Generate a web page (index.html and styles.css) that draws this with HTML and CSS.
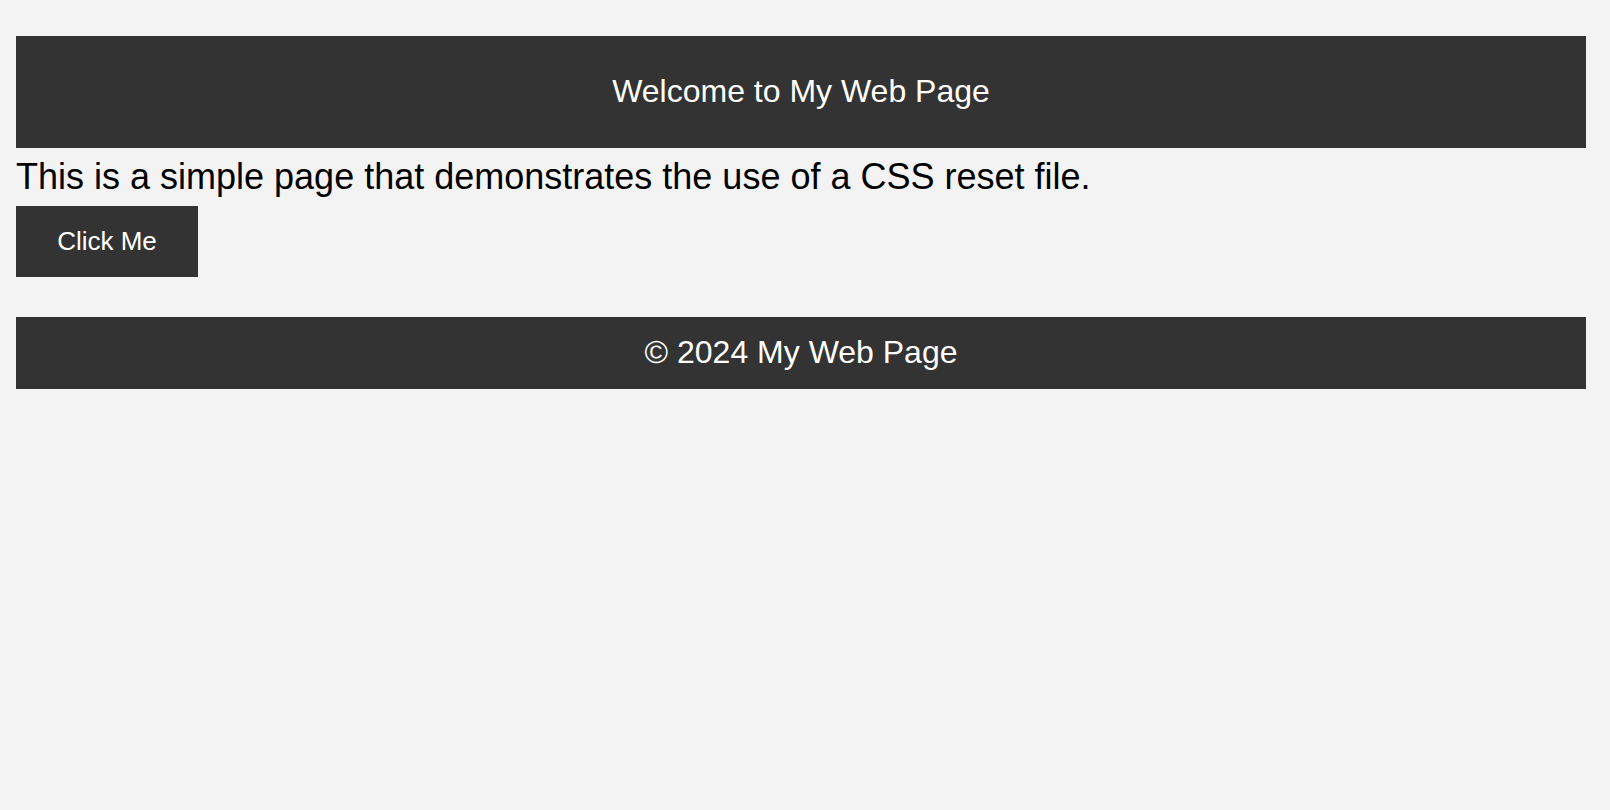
FILE: index.html
```html
<!DOCTYPE html>
<html lang="en">
<head>
<meta charset="utf-8">
<title>CSS Reset Demo</title>
<link rel="stylesheet" href="styles.css">
</head>
<body>
<div class="page">
  <header class="site-header">
    <h1 class="site-title">Welcome to My Web Page</h1>
  </header>
  <main class="content">
    <p class="intro">This is a simple page that demonstrates the use of a CSS reset file.</p>
    <button class="btn" type="button">Click Me</button>
  </main>
  <footer class="site-footer">
    <p class="footer-text">&copy; 2024 My Web Page</p>
  </footer>
</div>
</body>
</html>
```
FILE: styles.css
```css
* {
  margin: 0;
  padding: 0;
  box-sizing: border-box;
}

html, body {
  height: 100%;
}

body {
  background: #f3f3f3;
  font-family: "Liberation Sans", Arial, Helvetica, sans-serif;
  color: #000;
  padding: 36px 24px 0 16px;
}

.page {
  display: flex;
  flex-direction: column;
  width: 1570px;
}

.site-header {
  background: #333333;
  color: #fff;
  text-align: center;
  padding: 37px 0 38px;
}

.site-title {
  font-size: 32px;
  font-weight: normal;
  line-height: 37px;
}

.content {
  display: flex;
  flex-direction: column;
  align-items: flex-start;
  padding-bottom: 40px;
}

.intro {
  font-size: 36px;
  line-height: 42px;
  margin: 8px 0;
}

.btn {
  background: #333333;
  color: #fff;
  border: none;
  font-family: inherit;
  font-size: 26px;
  line-height: 30px;
  padding: 20px 40px 21px;
  width: 182px;
  cursor: pointer;
}

.site-footer {
  background: #333333;
  color: #fff;
  text-align: center;
  padding: 17px 0 18px;
}

.footer-text {
  font-size: 32px;
  line-height: 37px;
}
```
